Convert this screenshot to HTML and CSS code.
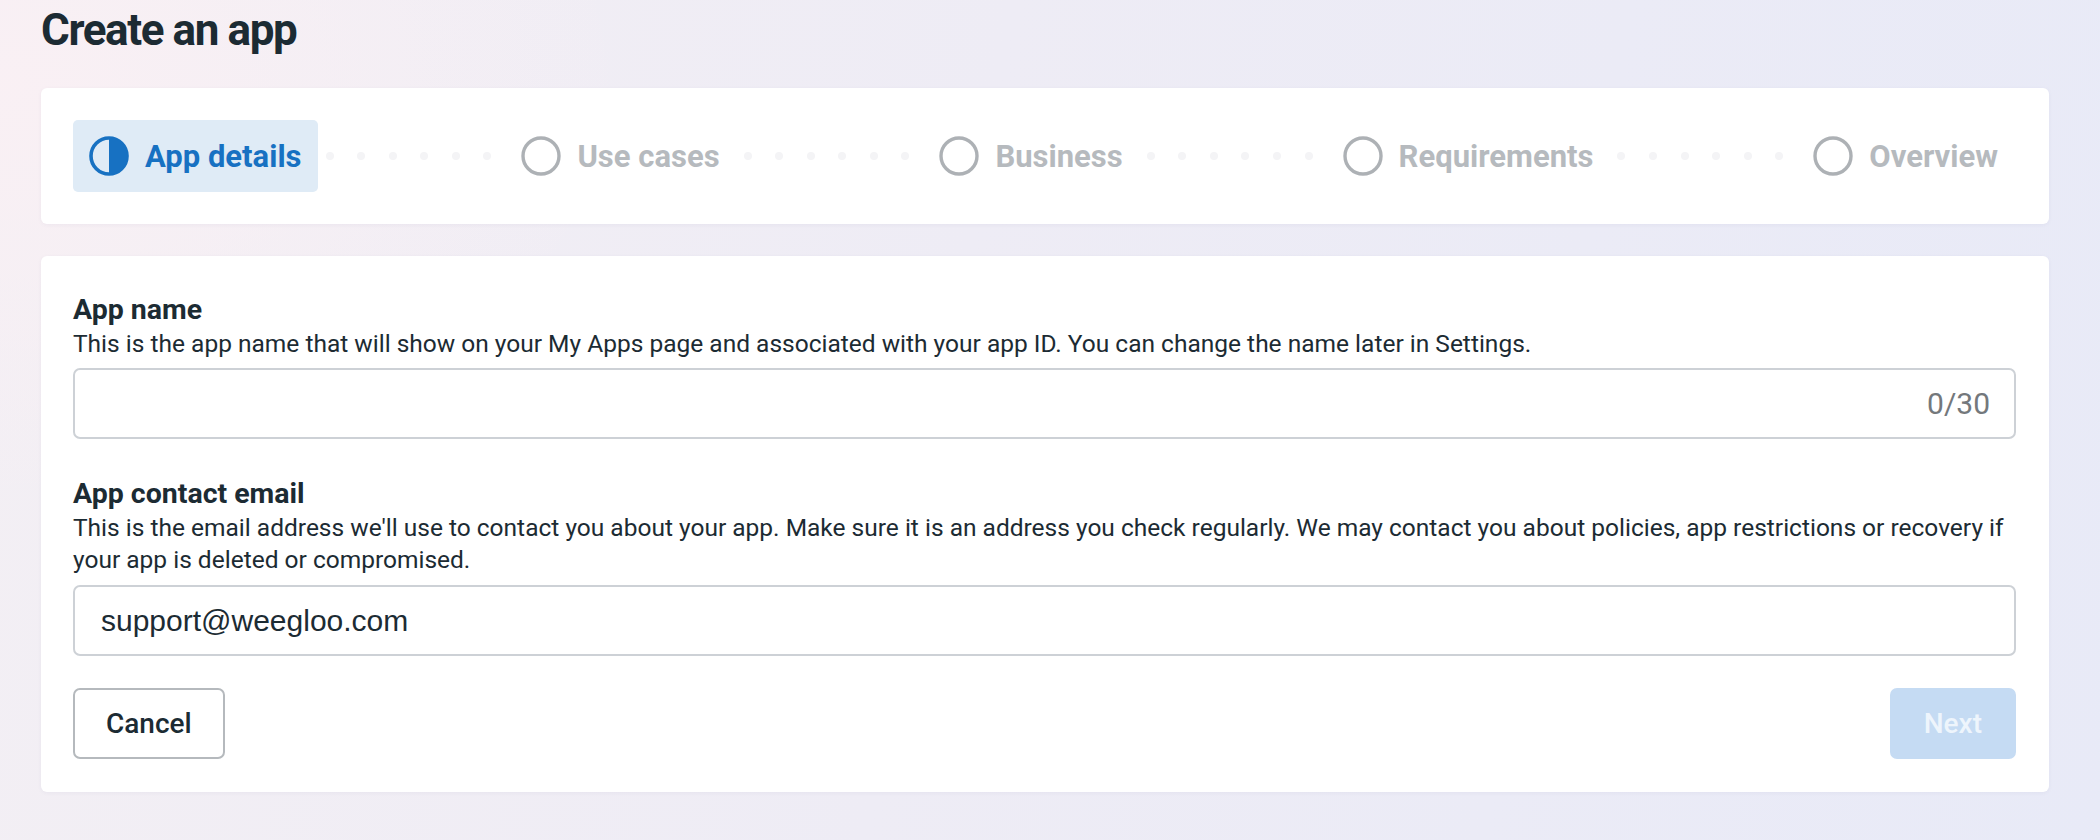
FILE: index.html
```html
<!DOCTYPE html>
<html lang="en">
<head>
<meta charset="utf-8">
<title>Create an app</title>
<link rel="stylesheet" href="styles.css">
</head>
<body>
<div class="page">
  <h1 class="title">Create an app</h1>

  <div class="card stepper-card">
    <div class="stepper">
      <div class="step step-active">
        <svg class="step-icon" viewBox="0 0 40 40" width="40" height="40">
          <circle cx="20" cy="20" r="18" fill="none" stroke="#1771c2" stroke-width="3.6"/>
          <path d="M20 2 A18 18 0 0 1 20 38 Z" fill="#1771c2"/>
        </svg>
        <span class="step-label">App details</span>
      </div>
      <div class="connector"><i></i><i></i><i></i><i></i><i></i><i></i></div>
      <div class="step">
        <svg class="step-icon" viewBox="0 0 40 40" width="40" height="40">
          <circle cx="20" cy="20" r="18" fill="none" stroke="#adb1b5" stroke-width="3.4"/>
        </svg>
        <span class="step-label">Use cases</span>
      </div>
      <div class="connector"><i></i><i></i><i></i><i></i><i></i><i></i></div>
      <div class="step">
        <svg class="step-icon" viewBox="0 0 40 40" width="40" height="40">
          <circle cx="20" cy="20" r="18" fill="none" stroke="#adb1b5" stroke-width="3.4"/>
        </svg>
        <span class="step-label">Business</span>
      </div>
      <div class="connector"><i></i><i></i><i></i><i></i><i></i><i></i></div>
      <div class="step">
        <svg class="step-icon" viewBox="0 0 40 40" width="40" height="40">
          <circle cx="20" cy="20" r="18" fill="none" stroke="#adb1b5" stroke-width="3.4"/>
        </svg>
        <span class="step-label">Requirements</span>
      </div>
      <div class="connector"><i></i><i></i><i></i><i></i><i></i><i></i></div>
      <div class="step">
        <svg class="step-icon" viewBox="0 0 40 40" width="40" height="40">
          <circle cx="20" cy="20" r="18" fill="none" stroke="#adb1b5" stroke-width="3.4"/>
        </svg>
        <span class="step-label">Overview</span>
      </div>
    </div>
  </div>

  <div class="card form-card">
    <div class="field">
      <div class="field-label">App name</div>
      <div class="field-desc">This is the app name that will show on your My Apps page and associated with your app ID. You can change the name later in Settings.</div>
      <div class="input">
        <span class="input-value"></span>
        <span class="counter">0/30</span>
      </div>
    </div>

    <div class="field field-second">
      <div class="field-label">App contact email</div>
      <div class="field-desc">This is the email address we'll use to contact you about your app. Make sure it is an address you check regularly. We may contact you about policies, app restrictions or recovery if your app is deleted or compromised.</div>
      <div class="input">
        <span class="input-value email">support@weegloo.com</span>
      </div>
    </div>

    <div class="actions">
      <button class="btn btn-cancel" type="button">Cancel</button>
      <button class="btn btn-next" type="button">Next</button>
    </div>
  </div>
</div>
</body>
</html>
```

FILE: styles.css
```css
html, body {
  margin: 0;
  padding: 0;
}

body {
  width: 2100px;
  height: 840px;
  overflow: hidden;
  font-family: Roboto, "Noto Sans", "Liberation Sans", sans-serif;
  color: #1c2b33;
  background:
    radial-gradient(ellipse 900px 600px at 0% 10%, rgba(250, 240, 244, 0.9), rgba(250, 240, 244, 0) 70%),
    linear-gradient(100deg, #f3eff4 0%, #eeecf5 45%, #e8eaf7 100%);
}

.page {
  padding: 2px 51px 0 41px;
}

.title {
  margin: 0 0 30px 0;
  font-size: 44px;
  line-height: 56px;
  font-weight: 700;
  letter-spacing: -1.4px;
  color: #1c2b33;
}

.card {
  background: #ffffff;
  border-radius: 6px;
  box-shadow: 0 1px 4px rgba(60, 60, 110, 0.05);
}

/* Stepper */
.stepper-card {
  padding: 32px 35px 32px 32px;
}

.stepper {
  display: flex;
  align-items: center;
}

.step {
  display: flex;
  align-items: center;
  gap: 16px;
  height: 72px;
  padding: 0 16px;
  border-radius: 5px;
  flex: none;
}

.step-active {
  background: #dfebf6;
}

.step-icon {
  display: block;
  flex: none;
}

.step-label {
  font-size: 31px;
  font-weight: 700;
  color: #b6babe;
  white-space: nowrap;
}

.step-active .step-label {
  color: #1771c2;
}

.connector {
  flex: 1;
  display: flex;
  justify-content: space-between;
  align-items: center;
  padding: 0 14px 0 8px;
}

.connector i {
  display: block;
  width: 8px;
  height: 8px;
  border-radius: 50%;
  background: #f4f4f6;
}

/* Form */
.form-card {
  margin-top: 32px;
  padding: 36px 33px 33px 32px;
}

.field-second {
  margin-top: 37px;
}

.field-label {
  font-size: 28.5px;
  line-height: 36px;
  font-weight: 700;
  color: #1c2b33;
}

.field-desc {
  font-size: 24.5px;
  line-height: 32px;
  color: #1c2b33;
}

.input {
  margin-top: 8px;
  height: 71px;
  box-sizing: border-box;
  border: 2px solid #cdd1d6;
  border-radius: 7px;
  display: flex;
  align-items: center;
  padding: 0 24px 0 26px;
}

.field-second .input {
  margin-top: 9px;
}

.input-value {
  flex: 1;
}

.email {
  font-family: "Liberation Sans", Arial, sans-serif;
  font-size: 30px;
  color: #1c2b33;
}

.counter {
  font-size: 30px;
  color: #74787c;
}

.actions {
  margin-top: 32px;
  display: flex;
  justify-content: space-between;
  align-items: center;
}

.btn {
  height: 71px;
  box-sizing: border-box;
  border-radius: 7px;
  font-family: Roboto, "Noto Sans", "Liberation Sans", sans-serif;
  font-size: 28px;
  font-weight: 500;
  padding: 0 31px;
  cursor: pointer;
}

.btn-cancel {
  background: #ffffff;
  border: 2px solid #b5b9bd;
  color: #1c2b33;
}

.btn-next {
  background: #c5dbf3;
  border: 2px solid #c5dbf3;
  color: #eef5fc;
  padding: 0 32px;
}
```
